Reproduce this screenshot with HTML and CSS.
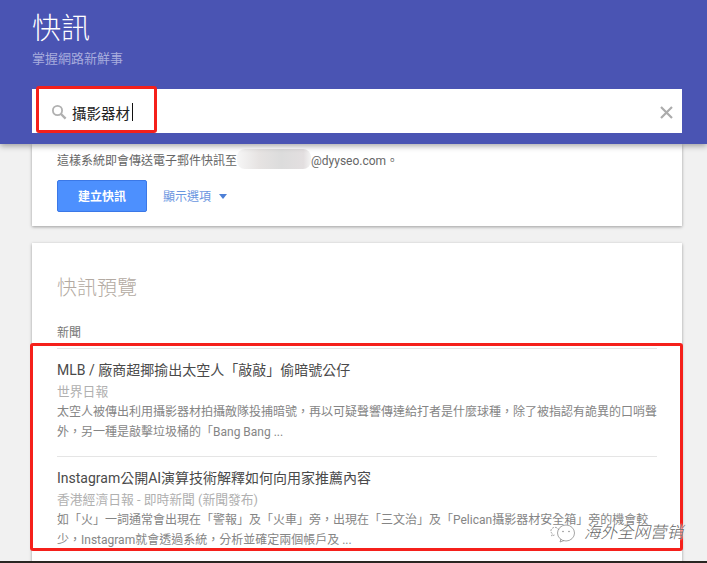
FILE: index.html
```html
<!DOCTYPE html>
<html lang="zh-Hant">
<head>
<meta charset="utf-8">
<title>快訊</title>
<link rel="stylesheet" href="styles.css">
</head>
<body>
<header class="top">
  <h1 class="brand">快訊</h1>
  <p class="tagline">掌握網路新鮮事</p>
  <div class="search">
    <svg class="search-icon" width="16" height="16" viewBox="0 0 16 16"><circle cx="6.5" cy="6.5" r="4.6" fill="none" stroke="#b0b0b0" stroke-width="1.8"/><path d="M10 10l4.6 4.6" stroke="#b0b0b0" stroke-width="2.4" fill="none"/></svg>
    <span class="query">攝影器材</span><span class="caret"></span>
    <svg class="clear" width="13" height="13" viewBox="0 0 13 13"><path d="M1 1l11 11M12 1L1 12" stroke="#acacac" stroke-width="2.2" fill="none"/></svg>
  </div>
</header>
<main class="content">
  <section class="card create">
    <p class="notice">這樣系統即會傳送電子郵件快訊至<span class="smudge"></span><span class="mail">@dyyseo.com。</span></p>
    <div class="actions">
      <button class="primary">建立快訊</button>
      <span class="options">顯示選項</span>
      <span class="arrow"></span>
    </div>
  </section>
  <section class="card preview">
    <h2 class="preview-title">快訊預覽</h2>
    <h3 class="section">新聞</h3>
    <article class="item">
      <h4 class="item-title">MLB / 廠商超揶揄出太空人「敲敲」偷暗號公仔</h4>
      <div class="source">世界日報</div>
      <p class="snippet">太空人被傳出利用攝影器材拍攝敵隊投捕暗號&#xFF0C;再以可疑聲響傳達給打者是什麼球種&#xFF0C;除了被指認有詭異的口哨聲外&#xFF0C;另一種是敲擊垃圾桶的「Bang Bang ...</p>
    </article>
    <article class="item">
      <h4 class="item-title">Instagram公開AI演算技術解釋如何向用家推薦內容</h4>
      <div class="source">香港經濟日報 - 即時新聞 (新聞發布)</div>
      <p class="snippet">如「火」一詞通常會出現在「警報」及「火車」旁&#xFF0C;出現在「三文治」及「Pelican攝影器材安全箱」旁的機會較少&#xFF0C;Instagram就會透過系統&#xFF0C;分析並確定兩個帳戶及 ...</p>
    </article>
  </section>
</main>
<div class="mark mark-search"></div>
<div class="mark mark-results"></div>
<div class="watermark">
  <svg width="28" height="20" viewBox="0 0 28 20"><g fill="none" stroke="#8f8f8f" stroke-width="0.8"><path d="M9 7C7 3 2 4 1 7c-.4 2 .5 3 1.500 4l-1 2 3-1" stroke-dasharray="2 1"/><ellipse cx="16" cy="10" rx="8.500" ry="8"/><path d="M11 16l-1 3 4-1.500"/></g><circle cx="13" cy="8.500" r=".8" fill="#8f8f8f"/><circle cx="19" cy="8.500" r=".8" fill="#8f8f8f"/></svg>
  <span class="wm-text">海外全网营销</span>
</div>
<div class="edge"></div>
</body>
</html>
```
FILE: styles.css
```css
* { box-sizing: border-box; }
html, body { margin: 0; height: 100%; overflow: hidden; }
body {
  width: 707px;
  height: 563px;
  position: relative;
  background: #f1f1f1;
  font-family: Roboto, "Noto Sans CJK TC", sans-serif;
  color: #666;
}
.top {
  position: relative;
  z-index: 2;
  height: 144px;
  padding: 10px 25px 0 32px;
  background: #4a54b3;
  box-shadow: 0 2px 6px rgba(0,0,0,.35);
}
.brand {
  margin: 0;
  height: 38px;
  font-size: 29px;
  line-height: 38px;
  font-weight: 300;
  color: #fff;
}
.tagline {
  margin: 2px 0 0;
  height: 18px;
  font-size: 13px;
  line-height: 18px;
  color: #a7acdd;
}
.search {
  display: flex;
  align-items: center;
  height: 44px;
  margin-top: 21px;
  padding: 2px 9px 0 19px;
  background: #fff;
}
.search-icon { margin-right: 5px; }
.query { font-size: 14.5px; color: #222; }
.caret { width: 1px; height: 18px; margin-left: 2px; background: #111; }
.clear { margin-left: auto; }
.content { padding: 0 25px 0 32px; }
.card {
  background: #fff;
  box-shadow: 0 1px 3px rgba(0,0,0,.35);
}
.create { height: 82px; padding: 5px 25px 0; }
.notice {
  display: flex;
  align-items: center;
  margin: 0;
  height: 20px;
  font-size: 12px;
  color: #666;
}
.smudge {
  width: 74px;
  height: 20px;
  border-radius: 8px;
  background: linear-gradient(90deg, #f6f6f6 0, #e6e3e2 30%, #dcdcdc 60%, #e3dfe0 90%, #f4f4f4 100%);
}
.mail { font-size: 12px; }
.actions { display: flex; align-items: center; margin-top: 11px; }
.primary {
  width: 90px;
  height: 32px;
  padding: 0 0 2px;
  border: 1px solid #3b78e7;
  border-radius: 2px;
  background: #4d90fe;
  font: 700 12px Roboto, "Noto Sans CJK TC", sans-serif;
  color: #fff;
}
.options { margin: 0 0 2px 16px; font-size: 12px; color: #6a96df; }
.arrow {
  width: 0;
  height: 0;
  margin-left: 8px;
  border: 4px solid transparent;
  border-top: 5px solid #4d7fd6;
  border-bottom: 0;
}
.preview { height: 330px; margin-top: 17px; padding: 30px 25px 0; }
.preview-title {
  margin: 0;
  height: 30px;
  font-size: 20px;
  line-height: 30px;
  font-weight: 300;
  color: #b3aaa2;
}
.section {
  margin: 20px 0 0;
  height: 20px;
  font-size: 12px;
  line-height: 20px;
  font-weight: 400;
  color: #777;
}
.item { height: 108px; padding-top: 11px; border-top: 1px solid #e5e5e5; }
.section + .item { margin-top: 5px; }
.item-title {
  margin: 0;
  height: 21px;
  font-size: 14px;
  line-height: 21px;
  font-weight: 400;
  color: #4a4a4a;
}
.source {
  height: 21px;
  font-size: 12.8px;
  line-height: 21px;
  color: #b0b0b0;
}
.snippet {
  margin: 0;
  font-size: 12px;
  line-height: 20px;
  color: #858585;
}
.mark { position: absolute; z-index: 3; border: 3px solid #f5201b; border-radius: 3px; }
.mark-search { left: 36px; top: 86px; width: 121px; height: 47px; }
.mark-results { left: 30px; top: 343px; width: 653px; height: 208px; }
.watermark {
  position: absolute;
  z-index: 4;
  left: 550px;
  top: 522px;
  display: flex;
  align-items: center;
  gap: 6px;
}
.wm-text {
  font-size: 16.5px;
  font-weight: 300;
  font-style: italic;
  line-height: 22px;
  color: #666;
  white-space: nowrap;
  text-shadow: 0 0 2px #fff, 0 0 2px #fff;
}
.edge {
  position: absolute;
  z-index: 5;
  left: 0;
  right: 0;
  bottom: 0;
  height: 2px;
  background: #2a2622;
}
```
